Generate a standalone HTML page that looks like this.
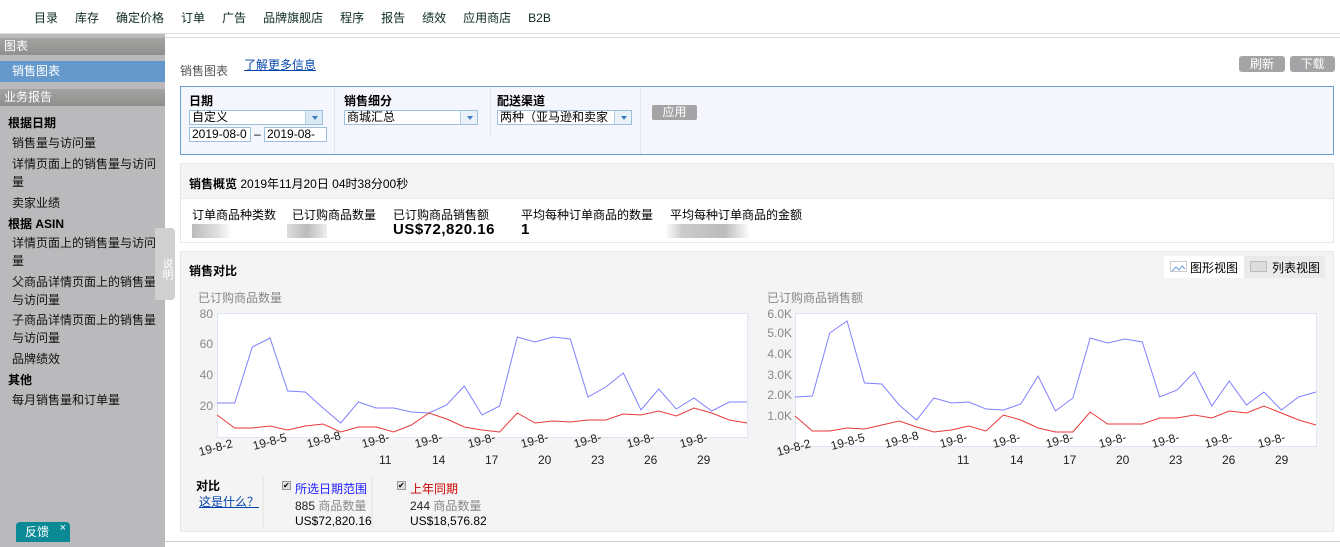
<!DOCTYPE html>
<html><head><meta charset="utf-8"><style>
*{margin:0;padding:0;box-sizing:border-box}
body{width:1340px;height:547px;position:relative;overflow:hidden;background:#fff;font-family:"Liberation Sans","Noto Sans CJK SC",sans-serif;font-size:12px;color:#000}
.a{position:absolute;white-space:nowrap}
.nav span{margin-right:17px;font-size:12px;color:#0b2a22}
.sb{position:absolute;left:0;top:34px;width:165px;height:513px;background:#bab9bb}
.hd{position:absolute;left:0;width:165px;height:17px;background:linear-gradient(#a3a3a1,#8f8f8d);color:#fff;font-size:12px;padding-left:4px;line-height:17px}
.sbt{position:absolute;left:12px;font-size:12px;color:#111}
.sbb{position:absolute;left:8px;font-weight:bold;font-size:12px}
.sel{border:1px solid #9cc0dc;background:#fff;height:15px;font-size:12px;line-height:13px;padding-left:2px;position:absolute}
.arr{position:absolute;right:0;top:0;width:17px;height:13px;background:#dbe9f6;border-left:1px solid #b7cfe3}
.arr:after{content:"";position:absolute;left:6px;top:5px;border:3px solid transparent;border-top:4px solid #3d7cc0}
.btn{position:absolute;background:#a4a3a5;color:#fff;border-radius:3px;font-size:12px;text-align:center;line-height:16px;height:16px}
</style></head><body>
<div class="a nav" style="left:34px;top:9px"><span>目录</span><span>库存</span><span>确定价格</span><span>订单</span><span>广告</span><span>品牌旗舰店</span><span>程序</span><span>报告</span><span>绩效</span><span>应用商店</span><span>B2B</span></div>
<div class="a" style="left:0;top:33px;width:1340px;height:1px;background:#ddd"></div>
<div class="a" style="left:155px;top:34px;width:1185px;height:4px;border-bottom:1px solid #ddd;border-left:1px solid #ddd"></div>
<div class="sb">
<div class="hd" style="top:4px">图表</div>
<div class="a" style="left:0;top:27px;width:165px;height:21px;background:#6599cc;color:#fff;padding-left:12px;line-height:21px">销售图表</div>
<div class="hd" style="top:55px">业务报告</div>
<div class="sbb" style="top:80px">根据日期</div>
<div class="sbt" style="top:100px">销售量与访问量</div>
<div class="sbt" style="top:121px;line-height:18px;white-space:normal;width:150px">详情页面上的销售量与访问量</div>
<div class="sbt" style="top:160px">卖家业绩</div>
<div class="sbb" style="top:181px">根据 ASIN</div>
<div class="sbt" style="top:200px;line-height:18px;white-space:normal;width:150px">详情页面上的销售量与访问量</div>
<div class="sbt" style="top:239px;line-height:18px;white-space:normal;width:150px">父商品详情页面上的销售量与访问量</div>
<div class="sbt" style="top:277px;line-height:18px;white-space:normal;width:150px">子商品详情页面上的销售量与访问量</div>
<div class="sbt" style="top:316px">品牌绩效</div>
<div class="sbb" style="top:337px">其他</div>
<div class="sbt" style="top:357px">每月销售量和订单量</div>
</div>
<div class="a" style="left:155px;top:228px;width:20px;height:72px;background:#d0d0d0;border-radius:0 4px 4px 0;color:#fff;font-size:11px;writing-mode:vertical-rl;padding-top:30px;padding-left:3px">说明</div>
<div class="a" style="left:16px;top:522px;width:54px;height:20px;background:#0b8a96;border-radius:4px 4px 0 0;color:#fff;font-size:12px;line-height:20px;padding-left:9px">反馈<span style="position:absolute;right:4px;top:-4px;font-size:11px">×</span></div>

<div class="a" style="left:180px;top:62px;font-size:12px;color:#555">销售图表</div>
<div class="a" style="left:244px;top:56px;color:#0645ad;text-decoration:underline">了解更多信息</div>
<div class="btn" style="left:1239px;top:56px;width:46px">刷新</div>
<div class="btn" style="left:1290px;top:56px;width:45px">下载</div>

<div class="a" style="left:180px;top:86px;width:1154px;height:69px;background:#f5f6fd;border:1px solid #6a9fd4"></div>
<div class="a" style="left:334px;top:88px;width:1px;height:66px;background:#e3e5ee"></div>
<div class="a" style="left:490px;top:88px;width:1px;height:48px;background:#e3e5ee"></div>
<div class="a" style="left:640px;top:88px;width:1px;height:66px;background:#e3e5ee"></div>
<div class="a" style="left:189px;top:92px;font-weight:bold">日期</div>
<div class="sel" style="left:189px;top:110px;width:134px">自定义<div class="arr"></div></div>
<div class="sel" style="left:189px;top:127px;width:62px">2019-08-0</div>
<div class="a" style="left:254px;top:127px">–</div>
<div class="sel" style="left:264px;top:127px;width:63px;overflow:hidden">2019-08-31</div>
<div class="a" style="left:344px;top:92px;font-weight:bold">销售细分</div>
<div class="sel" style="left:344px;top:110px;width:134px">商城汇总<div class="arr" style="background:#eaf1f8"></div></div>
<div class="a" style="left:497px;top:92px;font-weight:bold">配送渠道</div>
<div class="sel" style="left:497px;top:110px;width:135px;overflow:hidden">两种（亚马逊和卖家<div class="arr" style="background:#eaf1f8"></div></div>
<div class="btn" style="left:652px;top:105px;width:45px;height:15px;line-height:15px;border-radius:2px">应用</div>

<div class="a" style="left:180px;top:163px;width:1154px;height:80px;border:1px solid #e8e8e8;background:#fff"></div>
<div class="a" style="left:181px;top:164px;width:1152px;height:35px;background:#f4f4f4;border-bottom:1px solid #e8e8e8"></div>
<div class="a" style="left:189px;top:175px"><b>销售概览</b> 2019年11月20日 04时38分00秒</div>
<div class="a" style="left:192px;top:206px">订单商品种类数</div>
<div class="a" style="left:292px;top:206px">已订购商品数量</div>
<div class="a" style="left:393px;top:206px">已订购商品销售额</div>
<div class="a" style="left:521px;top:206px">平均每种订单商品的数量</div>
<div class="a" style="left:670px;top:206px">平均每种订单商品的金额</div>
<div class="a" style="left:393px;top:221px;font-size:15px;font-weight:bold;letter-spacing:.5px">US$72,820.16</div>
<div class="a" style="left:521px;top:221px;font-size:15px;font-weight:bold">1</div>
<div class="a" style="left:192px;top:224px;width:40px;height:14px;background:linear-gradient(90deg,#bbb,#ddd 60%,#fff)"></div>
<div class="a" style="left:287px;top:224px;width:40px;height:14px;background:linear-gradient(90deg,#ddd,#bbb 50%,#eee)"></div>
<div class="a" style="left:665px;top:224px;width:85px;height:14px;background:linear-gradient(90deg,#fff,#ccc 20%,#bbb 70%,#fff)"></div>

<div class="a" style="left:180px;top:251px;width:1154px;height:281px;background:#f4f4f4;border:1px solid #e8e8e8"></div>
<div class="a" style="left:189px;top:262px;font-weight:bold">销售对比</div>
<div class="a" style="left:1164px;top:256px;width:80px;height:22px;background:#fff"></div>
<div class="a" style="left:1244px;top:256px;width:81px;height:22px;background:#eaeaea"></div>
<div class="a" style="left:1170px;top:261px;width:17px;height:11px;border:1px solid #ccc;background:#fff"><svg width="15" height="9"><polyline points="1,7 5,3 8,6 11,2 14,5" fill="none" stroke="#6aa0e0"/></svg></div>
<div class="a" style="left:1190px;top:259px">图形视图</div>
<div class="a" style="left:1250px;top:261px;width:17px;height:11px;border:1px solid #bbb;background:#ddd"></div>
<div class="a" style="left:1272px;top:259px">列表视图</div>

<svg class="a" style="left:180px;top:285px" width="1154" height="200">
<g font-family="Liberation Sans,Noto Sans CJK SC,sans-serif" font-size="12" fill="#888">
<text x="18" y="17">已订购商品数量</text>
<text x="587" y="17">已订购商品销售额</text>
<g text-anchor="end"><text x="33" y="33">80</text><text x="33" y="63">60</text><text x="33" y="94">40</text><text x="33" y="125">20</text>
<text x="612" y="33">6.0K</text><text x="612" y="52">5.0K</text><text x="612" y="73">4.0K</text><text x="612" y="94">3.0K</text><text x="612" y="114">2.0K</text><text x="612" y="135">1.0K</text></g>
</g>
<rect x="37.5" y="28.5" width="530" height="124" fill="#fff" stroke="#dde6f2"/>
<rect x="615.5" y="28.5" width="521" height="133" fill="#fff" stroke="#dde6f2"/>
<g transform="translate(37,-285)">
<polyline fill="none" stroke="#8080ff" stroke-width="1" points="0,403 17.7,403 35.3,347 53,338 70.7,391 88.3,392 106,408 123.7,423 141.3,402 159,408 176.7,408 194.3,412 212,413 229.7,405 247.3,386 265,415 282.7,406 300.3,337 318,342 335.7,337 353.3,339 371,397 388.7,387 406.3,373 424,410 441.7,389 459.3,409 477,398 494.7,411 512.3,402 530,402"/>
<polyline fill="none" stroke="#e83a3a" stroke-width="1" points="0,415 17.7,428 35.3,428 53,426 70.7,430 88.3,426 106,424 123.7,432 141.3,427 159,427 176.7,432 194.3,425 212,413 229.7,419 247.3,427 265,430 282.7,432 300.3,413 318,423 335.7,421 353.3,422 371,420 388.7,420 406.3,414 424,415 441.7,411 459.3,416 477,408 494.7,413 512.3,420 530,423"/>
</g>
<g transform="translate(615,-285)">
<polyline fill="none" stroke="#8080ff" stroke-width="1" points="0,397 17.4,396 34.7,333 52.1,321 69.5,383 86.8,384 104.2,405 121.6,420 138.9,398 156.3,403 173.7,402 191,409 208.4,410 225.8,404 243.1,376 260.5,411 277.9,398 295.2,338 312.6,343 330,339 347.3,342 364.7,397 382.1,390 399.4,372 416.8,406 434.2,381 451.5,405 468.9,392 486.3,410 503.6,397 521,392"/>
<polyline fill="none" stroke="#e83a3a" stroke-width="1" points="0,416 17.4,431 34.7,431 52.1,428 69.5,429 86.8,425 104.2,421 121.6,427 138.9,432 156.3,430 173.7,426 191,431 208.4,415 225.8,420 243.1,428 260.5,432 277.9,432 295.2,412 312.6,424 330,424 347.3,424 364.7,418 382.1,418 399.4,415 416.8,418 434.2,411 451.5,413 468.9,406 486.3,413 503.6,420 521,425"/>
</g>
<g font-family="Liberation Sans,sans-serif" font-size="12" fill="#222">
<g transform="translate(37,-12)">
<text transform="translate(-17,183) rotate(-15)">19-8-2</text><text transform="translate(37,177) rotate(-15)">19-8-5</text><text transform="translate(91,175) rotate(-15)">19-8-8</text>
<text transform="translate(146,175) rotate(-15)">19-8-</text><text x="162" y="191">11</text>
<text transform="translate(199,175) rotate(-15)">19-8-</text><text x="215" y="191">14</text>
<text transform="translate(252,175) rotate(-15)">19-8-</text><text x="268" y="191">17</text>
<text transform="translate(305,175) rotate(-15)">19-8-</text><text x="321" y="191">20</text>
<text transform="translate(358,175) rotate(-15)">19-8-</text><text x="374" y="191">23</text>
<text transform="translate(411,175) rotate(-15)">19-8-</text><text x="427" y="191">26</text>
<text transform="translate(464,175) rotate(-15)">19-8-</text><text x="480" y="191">29</text>
</g>
<g transform="translate(615,-12)">
<text transform="translate(-17,183) rotate(-15)">19-8-2</text><text transform="translate(37,177) rotate(-15)">19-8-5</text><text transform="translate(91,175) rotate(-15)">19-8-8</text>
<text transform="translate(146,175) rotate(-15)">19-8-</text><text x="162" y="191">11</text>
<text transform="translate(199,175) rotate(-15)">19-8-</text><text x="215" y="191">14</text>
<text transform="translate(252,175) rotate(-15)">19-8-</text><text x="268" y="191">17</text>
<text transform="translate(305,175) rotate(-15)">19-8-</text><text x="321" y="191">20</text>
<text transform="translate(358,175) rotate(-15)">19-8-</text><text x="374" y="191">23</text>
<text transform="translate(411,175) rotate(-15)">19-8-</text><text x="427" y="191">26</text>
<text transform="translate(464,175) rotate(-15)">19-8-</text><text x="480" y="191">29</text>
</g></g>
</svg>

<div class="a" style="left:196px;top:477px;font-weight:bold">对比</div>
<div class="a" style="left:199px;top:493px;color:#0645ad;text-decoration:underline">这是什么？</div>
<div class="a" style="left:262px;top:476px;width:2px;height:52px;background:#eaeaea"></div>
<div class="a" style="left:371px;top:476px;width:2px;height:52px;background:#eaeaea"></div>
<div class="a" style="left:282px;top:481px;width:9px;height:9px;border:1px solid #999;background:#ddd;font-size:8px;line-height:7px">✔</div>
<div class="a" style="left:295px;top:480px;color:#2020ff">所选日期范围</div>
<div class="a" style="left:295px;top:497px;color:#222">885 <span style="color:#888">商品数量</span></div>
<div class="a" style="left:295px;top:514px">US$72,820.16</div>
<div class="a" style="left:397px;top:481px;width:9px;height:9px;border:1px solid #999;background:#ddd;font-size:8px;line-height:7px">✔</div>
<div class="a" style="left:410px;top:480px;color:#cc0000">上年同期</div>
<div class="a" style="left:410px;top:497px;color:#222">244 <span style="color:#888">商品数量</span></div>
<div class="a" style="left:410px;top:514px">US$18,576.82</div>
<div class="a" style="left:165px;top:541px;width:1175px;height:1px;background:#ccc"></div>
</body></html>
